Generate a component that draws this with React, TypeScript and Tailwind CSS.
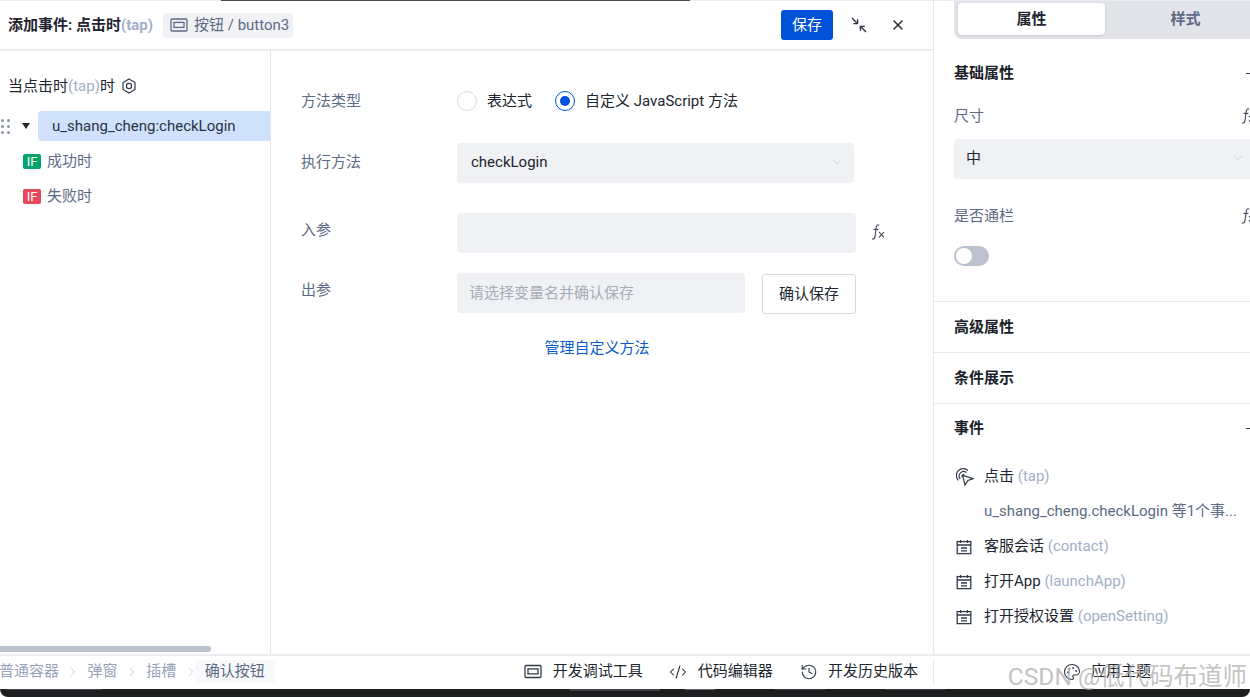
import React from 'react';
import { ChevronDown, ChevronRight, CodeXml, History, Palette, X } from 'lucide-react';

const FxIcon = ({ className = '' }: { className?: string }) => (
  <svg viewBox="0 0 14 16" className={className} fill="none" stroke="#3c4454" strokeWidth="1.1">
    <path d="M8 1.2C6.6 0.4 5.6 1.2 5.3 3L4 12.6C3.7 14.6 2.4 15.6 1 14.8" />
    <path d="M2.4 5.4H7.4" />
    <path d="M8 8l5 5.4M13 8l-5 5.4" />
  </svg>
);

const FrameIcon = ({ className = '' }: { className?: string }) => (
  <svg viewBox="0 0 18 14" className={className} fill="none" stroke="currentColor" strokeWidth="1.3">
    <rect x="1" y="1" width="16" height="12" rx="1" />
    <rect x="4" y="4.4" width="10" height="5" />
  </svg>
);

const EventIcon = () => (
  <svg viewBox="0 0 16 16" className="w-4 h-4 shrink-0 text-[#333b49]" fill="none" stroke="currentColor" strokeWidth="1.3">
    <rect x="1.2" y="2.6" width="13.6" height="12" />
    <path d="M1.2 6h13.6M4.6 1v3M11.4 1v3M5 9h6M5 11.8h6" />
  </svg>
);

const ClickIcon = () => (
  <svg viewBox="0 0 18 18" className="w-[18px] h-[18px] shrink-0 text-[#333b49]" fill="none" stroke="currentColor" strokeWidth="1.2">
    <path d="M9 17L6.6 7.4 17 10.6 12 12.4z" />
    <path d="M4.2 10.8A4.4 4.4 0 0 1 10.4 4.6" />
    <path d="M2.4 12.4A6.8 6.8 0 0 1 12 2.6" />
    <path d="M6 9A2 2 0 0 1 8.4 6.6" />
  </svg>
);

const Section = ({ title }: { title: string }) => (
  <div className="h-[51px] pl-5 flex items-center text-[15px] font-bold text-[#1a1f29] border-b border-[#e6e8ee]">
    {title}
  </div>
);

const EventRow = ({ cn, en, icon }: { cn: string; en?: string; icon?: React.ReactNode }) => (
  <div className="h-[35px] flex items-center">
    <div className="w-[30px] shrink-0 pl-[2px]">{icon}</div>
    <span className="text-[#20252f] whitespace-pre">{cn}</span>
    {en && <span className="text-[#a3afc6] whitespace-pre"> {en}</span>}
  </div>
);

const Crumb = ({ label }: { label: string }) => (
  <>
    <span className="text-[#97a3b8]">{label}</span>
    <ChevronRight className="w-[14px] h-[14px] mx-[7.3px] text-[#c0c6d2]" strokeWidth={1.4} />
  </>
);

export default function App() {
  return (
    <div className="relative w-[1250px] h-[697px] overflow-hidden bg-white flex flex-col font-['Roboto','Noto_Sans_CJK_SC',sans-serif] text-[15px]">
      {/* sliver of the page behind the dialog */}
      <div className="h-px shrink-0 bg-[#ecedf2] flex">
        <div className="ml-[221px] w-[469px] bg-[#4a4a4a]" />
      </div>

      <div className="flex-1 min-h-0 flex">
        {/* event dialog */}
        <div className="w-[934px] shrink-0 flex flex-col border-r border-[#e6e8ee]">
          <div className="h-[50px] shrink-0 flex items-center pl-2 border-b-2 border-[#ebedf2]">
            <span className="font-bold text-[#1f2430]">添加事件: 点击时<span className="text-[#a3afc6]">(tap)</span></span>
            <div className="ml-[10px] h-[25px] pl-[7px] pr-[4px] flex items-center gap-[6px] rounded bg-[#f0f2f6] text-[#5c6a85]">
              <FrameIcon className="w-[18px] h-[14px]" />
              <span>按钮 / button3</span>
            </div>
            <button className="ml-auto h-[30px] w-[52px] rounded-[3px] bg-[#0252d9] text-white">保存</button>
            <svg viewBox="0 0 16 16" className="ml-[18px] w-4 h-4 text-[#333b49]" fill="none" stroke="currentColor" strokeWidth="1.4">
              <path d="M1 1l5.4 5.4M2.2 6.6h4.4V2.2M15 15L9.6 9.6M13.8 9.4H9.4v4.4" />
            </svg>
            <X className="ml-[23px] mr-[27px] w-[16px] h-[16px] text-[#20252f]" strokeWidth={2} />
          </div>

          <div className="flex-1 min-h-0 flex relative">
            {/* action tree */}
            <div className="w-[271px] shrink-0 border-r border-[#e6e8ee]">
              <div className="h-[60px] pt-[25px] pl-2 flex items-start">
                <span className="text-[#20252f] leading-[20px]">当点击时<span className="text-[#a3afc6]">(tap)</span>时</span>
                <svg viewBox="0 0 16 16" className="ml-[6px] mt-[2px] w-4 h-4" fill="none" stroke="#333b49" strokeWidth="1.2">
                  <path d="M8 1l6 3.5v7L8 15l-6-3.5v-7z" />
                  <circle cx="8" cy="8" r="2.6" />
                </svg>
              </div>
              <div className="h-[30px] flex items-center">
                <div className="w-[38px] shrink-0 flex items-center">
                  <div className="ml-px grid grid-cols-2 gap-x-[3px] gap-y-[3px]">
                    {[0, 1, 2, 3, 4, 5].map((i) => (
                      <span key={i} className="w-[3px] h-[3px] rounded-full bg-[#8d96a6]" />
                    ))}
                  </div>
                  <div className="ml-[12px] w-0 h-0 border-x-[4.5px] border-x-transparent border-t-[6px] border-t-[#23272f]" />
                </div>
                <div className="flex-1 h-full pl-[14px] flex items-center rounded-l bg-[#d0e1fb] text-[#2a3345]">u_shang_cheng:checkLogin</div>
              </div>
              <div className="mt-[3px] h-[35px] pl-[23px] flex items-center gap-[6px] text-[#5c6a85]">
                <span className="w-[18px] h-[15px] rounded-[2px] bg-[#03a56d] text-white text-[13px] leading-[15px] text-center">IF</span>
                成功时
              </div>
              <div className="h-[35px] pl-[23px] flex items-center gap-[6px] text-[#5c6a85]">
                <span className="w-[18px] h-[15px] rounded-[2px] bg-[#e8485b] text-white text-[13px] leading-[15px] text-center">IF</span>
                失败时
              </div>
            </div>

            {/* method form */}
            <div className="flex-1 pl-[30px] pt-[39px] text-[#5c6a85]">
              <div className="h-[22px] flex items-center">
                <span className="w-[156px]">方法类型</span>
                <span className="w-5 h-5 rounded-full border border-[#d7dbe3] bg-white" />
                <span className="ml-[10px] text-[#20252f]">表达式</span>
                <span className="ml-[23px] w-5 h-5 rounded-full border border-[#0252d9] flex items-center justify-center">
                  <span className="w-[10px] h-[10px] rounded-full bg-[#0252d9]" />
                </span>
                <span className="ml-[10px] text-[#20252f]">自定义 JavaScript 方法</span>
              </div>
              <div className="mt-[31px] h-[40px] flex items-center">
                <span className="w-[156px] pb-[2px]">执行方法</span>
                <div className="w-[397px] h-full pl-[14px] pr-[10px] pb-[2px] flex items-center justify-between rounded bg-[#f0f1f5] text-[#20252f]">
                  checkLogin
                  <ChevronDown className="w-[14px] h-[14px] text-[#c2c7d1]" strokeWidth={1.3} />
                </div>
              </div>
              <div className="mt-[30px] h-[40px] flex items-start">
                <span className="w-[156px] pt-[7px] leading-[20px]">入参</span>
                <div className="w-[399px] h-full rounded bg-[#f0f1f5]" />
                <FxIcon className="ml-[15px] mt-[11px] w-[14px] h-4" />
              </div>
              <div className="mt-[20px] h-[41px] flex items-start">
                <span className="w-[156px] pt-[7px] leading-[20px]">出参</span>
                <div className="w-[288px] h-[40px] pl-3 flex items-center rounded bg-[#f0f1f5] text-[#a6acb8]">请选择变量名并确认保存</div>
                <button className="ml-[17px] mt-px w-[94px] h-[40px] rounded-[3px] border border-[#d7dbe3] bg-white text-[#20252f]">确认保存</button>
              </div>
              <div className="mt-[24px] w-[592px] text-center text-[#0b5bc9] leading-[20px]">管理自定义方法</div>
            </div>

            {/* horizontal scrollbar of the tree */}
            <div className="absolute left-0 bottom-[2px] w-[211px] h-[6px] rounded-r-full bg-[#b9c0ce]" />
          </div>
        </div>

        {/* property panel */}
        <div className="flex-1 min-w-0 overflow-hidden">
          <div className="ml-5 w-[340px] h-[39px] -mt-px pl-[4px] py-[3px] pb-[4px] flex rounded-bl-lg bg-[#e2e4e9] font-bold">
            <div className="w-[147px] flex items-center justify-center rounded-sm bg-white shadow-sm text-[#1f2430]">属性</div>
            <div className="w-[161px] flex items-center justify-center text-[#5c6a85]">样式</div>
          </div>
          <div className="h-[263px] pl-5 border-b border-[#e6e8ee]">
            <div className="pt-[24px] flex items-center justify-between leading-[20px] font-bold text-[#1a1f29]">
              基础属性
              <span className="w-[4px] h-px mt-px bg-[#333b49]" />
            </div>
            <div className="mt-[23px] flex items-center justify-between leading-[20px] text-[#5c6a85]">
              尺寸
              <FxIcon className="w-[14px] h-4 -mr-[5px]" />
            </div>
            <div className="mt-[13px] w-[310px] h-[40px] pl-3 pr-[19px] pb-[2px] flex items-center justify-between rounded bg-[#f0f1f5] text-[#20252f]">
              <span>中</span>
              <ChevronDown className="w-[14px] h-[14px] text-[#c2c7d1]" strokeWidth={1.3} />
            </div>
            <div className="mt-[27px] flex items-center justify-between leading-[20px] text-[#5c6a85]">
              是否通栏
              <FxIcon className="w-[14px] h-4 -mr-[5px]" />
            </div>
            <div className="mt-[20px] w-[35px] h-5 p-[2px] rounded-full bg-[#bcc2cd]">
              <div className="w-4 h-4 rounded-full bg-white" />
            </div>
          </div>
          <Section title="高级属性" />
          <Section title="条件展示" />
          <div className="pl-5 pt-[14px]">
            <div className="flex items-center justify-between leading-[20px] font-bold text-[#1a1f29]">
              事件
              <span className="w-[4px] h-px mt-px bg-[#333b49]" />
            </div>
            <div className="mt-[21px]">
              <EventRow cn="点击" en="(tap)" icon={<ClickIcon />} />
              <div className="h-[35px] pl-[30px] flex items-center text-[#5c6a85] whitespace-nowrap">u_shang_cheng.checkLogin 等1个事...</div>
              <EventRow cn="客服会话" en="(contact)" icon={<EventIcon />} />
              <EventRow cn="打开App" en="(launchApp)" icon={<EventIcon />} />
              <EventRow cn="打开授权设置" en="(openSetting)" icon={<EventIcon />} />
            </div>
          </div>
        </div>
      </div>

      {/* bottom toolbar */}
      <div className="h-[35px] shrink-0 pb-[2px] flex items-center border-t-2 border-[#ebedf2] text-[#20252f]">
        <div className="-ml-px flex items-center h-full">
          <Crumb label="普通容器" />
          <Crumb label="弹窗" />
          <Crumb label="插槽" />
          <span className="-ml-[10px] h-[23px] px-[10px] flex items-center bg-[#f8f9fb] text-[#5c6a85]">确认按钮</span>
        </div>
        <FrameIcon className="ml-[249px] w-[18px] h-[15px] text-[#333b49]" />
        <span className="ml-[11px]">开发调试工具</span>
        <CodeXml className="ml-[24px] w-[22px] h-[18px] text-[#20252f]" strokeWidth={1.4} />
        <span className="ml-[9px]">代码编辑器</span>
        <History className="ml-[27px] w-[18px] h-[18px] text-[#333b49]" strokeWidth={1.5} />
        <span className="ml-[10px]">开发历史版本</span>
        <span className="ml-[15px] w-px h-[25px] bg-[#e6e8ee]" />
        <Palette className="ml-[129px] w-[18px] h-[18px] text-[#333b49]" strokeWidth={1.5} />
        <span className="ml-[10px]">应用主题</span>
      </div>

      {/* page chrome peeking out under the dialog */}
      <div className="h-2 shrink-0 rounded-b-xl bg-[#1d1e20] flex items-start">
        <span className="ml-[6px] w-[96px] h-px bg-[#4a4b4f]" />
        <span className="ml-[468px] w-[90px] h-[2px] bg-[#3e4044]" />
        <span className="ml-[25px] w-[30px] h-px bg-[#66676b]" />
        <span className="ml-[60px] w-[50px] h-px bg-[#3e4044]" />
        <span className="ml-[60px] w-[60px] h-px bg-[#3e4044]" />
      </div>

      {/* image watermark */}
      <div className="absolute right-[3px] bottom-[5px] text-[24.5px] leading-[30px] text-[#a8a8a8]/70 whitespace-nowrap pointer-events-none">
        CSDN @低代码布道师
      </div>
    </div>
  );
}
